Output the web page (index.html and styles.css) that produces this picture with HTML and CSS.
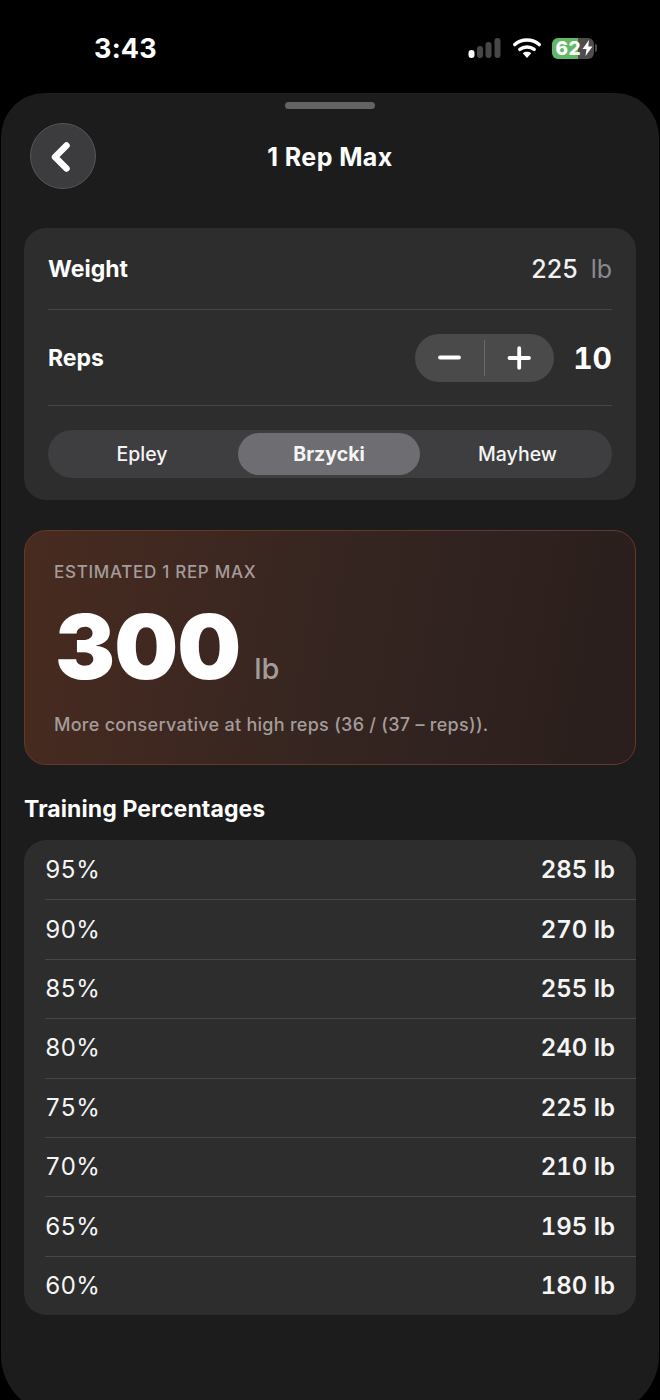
FILE: index.html
```html
<!DOCTYPE html>
<html lang="en">
<head>
<meta charset="utf-8">
<title>1 Rep Max</title>
<link rel="stylesheet" href="styles.css">
</head>
<body>
<div class="status">
  <span class="time">3:43</span>
  <div class="status-icons">
    <svg class="signal" width="33" height="20" viewBox="0 0 33 20">
      <rect x="0.500" y="12" width="6" height="8" rx="3" fill="#fff"/>
      <rect x="9" y="8" width="6" height="12" rx="3" fill="#474747"/>
      <rect x="17.500" y="4" width="6" height="16" rx="3" fill="#474747"/>
      <rect x="26.500" y="0" width="6" height="20" rx="3" fill="#474747"/>
    </svg>
    <svg class="wifi" width="28" height="20" viewBox="0 0 28 20">
      <path d="M1.800 6.600C8.500 0.400 19.500 0.400 26.200 6.600" fill="none" stroke="#fff" stroke-width="3.400" stroke-linecap="round"/>
      <path d="M6.800 11.400C10.800 8.200 17.200 8.200 21.200 11.400" fill="none" stroke="#fff" stroke-width="3.400" stroke-linecap="round"/>
      <path d="M14 20L9.800 15.200C12 13.400 16 13.400 18.200 15.200Z" fill="#fff"/>
    </svg>
    <div class="battery">
      <div class="battery-body"><span class="battery-num">62</span>
        <svg class="bolt" width="11" height="16" viewBox="0 0 11 16"><path d="M7 0L0.500 9H4.500L3.500 16L10.500 6.500H6.300Z" fill="#fff"/></svg>
      </div>
      <div class="battery-cap"></div>
    </div>
  </div>
</div>
<main class="sheet">
  <div class="grabber"></div>
  <header class="nav">
    <button class="back" aria-label="Back">
      <svg width="24" height="36" viewBox="0 0 24 36"><path d="M17.500 6.500L6 18L17.500 29.500" fill="none" stroke="#fff" stroke-width="6.500" stroke-linecap="round" stroke-linejoin="round"/></svg>
    </button>
    <h1 class="title">1 Rep Max</h1>
  </header>

  <section class="card inputs">
    <div class="row row-weight">
      <span class="label">Weight</span>
      <span class="weight-value">225<span class="weight-unit">lb</span></span>
    </div>
    <div class="row row-reps">
      <span class="label">Reps</span>
      <div class="reps-control">
        <div class="stepper">
          <svg class="step" width="69" height="48" viewBox="0 0 69 48"><path d="M25 23.500H44" stroke="#fff" stroke-width="3.800" stroke-linecap="round"/></svg>
          <div class="step-line"></div>
          <svg class="step" width="69" height="48" viewBox="0 0 69 48"><path d="M24.500 24H44M34.200 14.200V33.800" stroke="#fff" stroke-width="3.800" stroke-linecap="round"/></svg>
        </div>
        <span class="reps-value">10</span>
      </div>
    </div>
    <div class="segments">
      <span class="segment segment-first">Epley</span>
      <span class="segment segment-on">Brzycki</span>
      <span class="segment segment-last">Mayhew</span>
    </div>
  </section>

  <section class="result">
    <div class="result-label">ESTIMATED 1 REP MAX</div>
    <div class="result-main"><span class="result-num">300</span><span class="result-unit">lb</span></div>
    <div class="result-note">More conservative at high reps (36 / (37 – reps)).</div>
  </section>

  <h2 class="section-title">Training Percentages</h2>
  <section class="card table">
    <div class="t-row"><span>95%</span><span class="t-val">285 lb</span></div>
    <div class="t-row"><span>90%</span><span class="t-val">270 lb</span></div>
    <div class="t-row"><span>85%</span><span class="t-val">255 lb</span></div>
    <div class="t-row"><span>80%</span><span class="t-val">240 lb</span></div>
    <div class="t-row"><span>75%</span><span class="t-val">225 lb</span></div>
    <div class="t-row"><span>70%</span><span class="t-val">210 lb</span></div>
    <div class="t-row"><span>65%</span><span class="t-val">195 lb</span></div>
    <div class="t-row"><span>60%</span><span class="t-val">180 lb</span></div>
  </section>
</main>
</body>
</html>
```
FILE: styles.css
```css
* { box-sizing: border-box; }
html, body { margin: 0; padding: 0; }
body {
  width: 660px;
  height: 1400px;
  overflow: hidden;
  background: #000;
  color: #fff;
  font-family: Inter, "Liberation Sans", sans-serif;
}
.status {
  height: 93px;
  padding: 0 63px 0 94px;
  display: flex;
  justify-content: space-between;
  align-items: flex-start;
}
.time {
  margin-top: 31px;
  font-size: 27px;
  line-height: 36px;
  font-weight: 700;
  letter-spacing: .2px;
}
.status-icons {
  margin-top: 38px;
  height: 20px;
  display: flex;
  align-items: center;
  gap: 11.500px;
}
.signal, .wifi { display: block; }
.battery { display: flex; align-items: center; gap: 1px; }
.battery-body {
  position: relative;
  width: 42px;
  height: 21px;
  border-radius: 6px;
  background: linear-gradient(90deg, #62b866 0 63%, #4d4d4d 63% 100%);
  padding-left: 3.500px;
}
.battery-num { display: block; font-size: 19px; font-weight: 800; line-height: 21px; letter-spacing: .4px; }
.bolt { position: absolute; right: 1px; top: 2.500px; display: block; }
.battery-cap { width: 2px; height: 8px; border-radius: 0 2px 2px 0; background: #4d4d4d; }

.sheet {
  height: 1322px;
  margin: 0 1px;
  border-radius: 44px 44px 60px 60px;
  background: #1c1c1c;
  padding: 9px 23px 0;
}
.grabber {
  width: 90px;
  height: 7px;
  margin: 0 auto;
  border-radius: 4px;
  background: #636366;
}
.nav {
  position: relative;
  margin-top: 14px;
  padding-left: 6px;
  height: 66px;
  display: flex;
  align-items: center;
}
.back {
  width: 66px;
  height: 66px;
  padding: 0;
  border-radius: 50%;
  border: 1px solid #565658;
  background: #3c3c3e;
  display: flex;
  align-items: center;
  justify-content: center;
}
.back svg { display: block; margin-left: -4px; margin-top: 1px; }
.title {
  position: absolute;
  left: 0;
  right: 0;
  top: 1px;
  margin: 0;
  font-size: 25px;
  line-height: 66px;
  font-weight: 700;
  letter-spacing: .4px;
  text-align: center;
}
.card {
  background: #2d2d2d;
  border-radius: 22px;
}
.inputs {
  margin-top: 39px;
  height: 272px;
  padding: 0 24px;
}
.row {
  display: flex;
  justify-content: space-between;
  align-items: center;
  border-bottom: 1px solid #474747;
}
.row-weight { height: 82px; }
.row-reps { height: 96px; }
.label { font-size: 23px; font-weight: 700; }
.weight-value { font-size: 25px; color: #f2f2f2; font-weight: 500; }
.weight-unit { margin-left: 13px; color: #8a8a8e; font-weight: 400; }
.reps-control { display: flex; align-items: center; gap: 19px; }
.stepper {
  width: 139px;
  height: 48px;
  border-radius: 24px;
  background: #4a4a4a;
  display: flex;
  align-items: center;
}
.step { display: block; flex: none; }
.step-line { width: 1px; height: 36px; background: #6a6a6c; flex: none; }
.reps-value { font-size: 30px; font-weight: 700; font-variant-numeric: tabular-nums; }
.segments {
  margin-top: 24px;
  height: 48px;
  padding: 3px;
  border-radius: 24px;
  background: #3e3e40;
  display: grid;
  grid-template-columns: 187px 182px 1fr;
  align-items: stretch;
}
.segment {
  display: flex;
  align-items: center;
  justify-content: center;
  border-radius: 21px;
  font-size: 19.500px;
  font-weight: 500;
  color: #f5f5f5;
}
.segment-first { padding-right: 5px; }
.segment-last { padding-left: 6px; }
.segment-on { background: #6e6e72; font-weight: 700; }
.result {
  margin-top: 30px;
  height: 235px;
  padding: 30px 29px 0;
  border-radius: 22px;
  border: 1px solid #673826;
  background: linear-gradient(100deg, #482b20 0%, #352521 52%, #291e1c 100%);
}
.result-label {
  font-size: 17px;
  line-height: 22px;
  color: #a39c9b;
  font-weight: 500;
  letter-spacing: .7px;
}
.result-main {
  margin-top: 16px;
  height: 94px;
  display: flex;
  align-items: baseline;
}
.result-num {
  font-size: 90px;
  line-height: 96px;
  font-weight: 900;
  letter-spacing: -1px;
  padding-left: 1px;
}
.result-unit {
  margin-left: 14px;
  font-size: 29px;
  color: #a39c9b;
  font-weight: 500;
}
.result-note {
  margin-top: 20px;
  font-size: 18px;
  line-height: 24px;
  color: #a39c9b;
  font-weight: 500;
  letter-spacing: .28px;
}
.section-title {
  margin: 30px 0 0;
  height: 45px;
  font-size: 23px;
  line-height: 28px;
  font-weight: 700;
  letter-spacing: .1px;
}
.table {
  height: 475px;
  padding: 1px 0 0 21px;
}
.t-row {
  height: 59.400px;
  padding: 0 21px 1px 0;
  display: flex;
  justify-content: space-between;
  align-items: center;
  font-size: 24px;
  font-weight: 400;
  color: #f5f5f5;
  border-bottom: 1px solid #474747;
  font-variant-numeric: tabular-nums;
}
.t-row:last-child { border-bottom: 0; }
.t-val { font-weight: 600; }
```
